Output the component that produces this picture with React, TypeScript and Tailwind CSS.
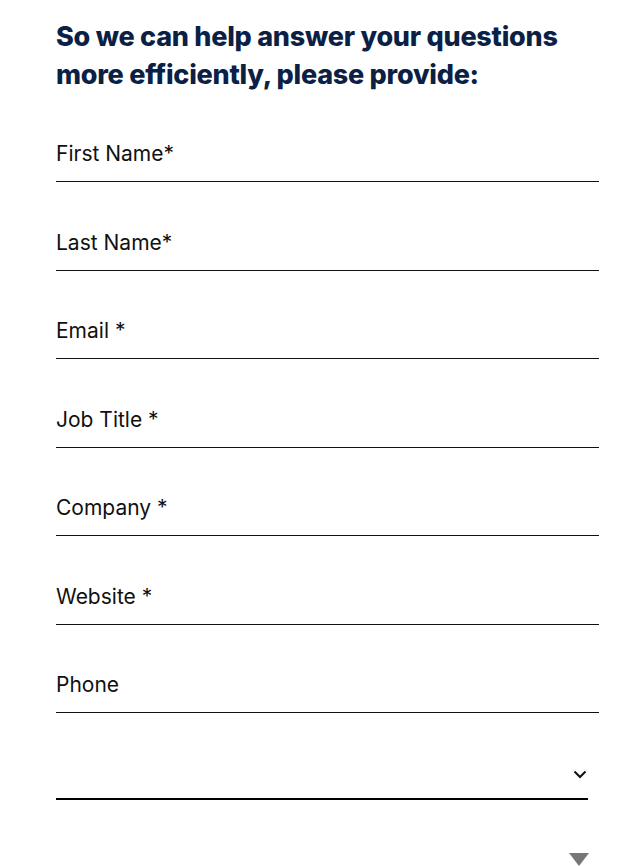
import React from "react";

const fields = [
  "First Name*",
  "Last Name*",
  "Email *",
  "Job Title *",
  "Company *",
  "Website *",
  "Phone",
];

export default function App() {
  return (
    <div className="w-[639px] h-[866px] overflow-hidden bg-white pl-[56px] pr-[40px]" style={{ fontFamily: "Inter, 'Liberation Sans', sans-serif" }}>
      <h1 className="pt-[18px] h-[93.5px] text-[27px] leading-[38px] font-extrabold text-[#0c1f45] tracking-[-0.25px]">
        So we can help answer your questions more efficiently, please provide:
      </h1>
      {fields.map((f) => (
        <div key={f} className="h-[88.5px] flex items-end border-b border-[#111]">
          <div className="pb-[15px] text-[21px] leading-[24px] text-[#111]">{f}</div>
        </div>
      ))}
      <div className="h-[87px] w-[532px] flex items-end justify-end border-b-2 border-black">
        <svg className="mb-[19px] mr-[1px]" width="14" height="9" viewBox="0 0 14 9">
          <path d="M1.5 1.5 L7 7 L12.5 1.5" fill="none" stroke="#111" strokeWidth="2" />
        </svg>
      </div>
      <div className="flex justify-end w-[533px] pt-[53px]">
        <svg width="20" height="13" viewBox="0 0 20 13">
          <path d="M0 0 H20 L10 13 Z" fill="#777" />
        </svg>
      </div>
    </div>
  );
}
